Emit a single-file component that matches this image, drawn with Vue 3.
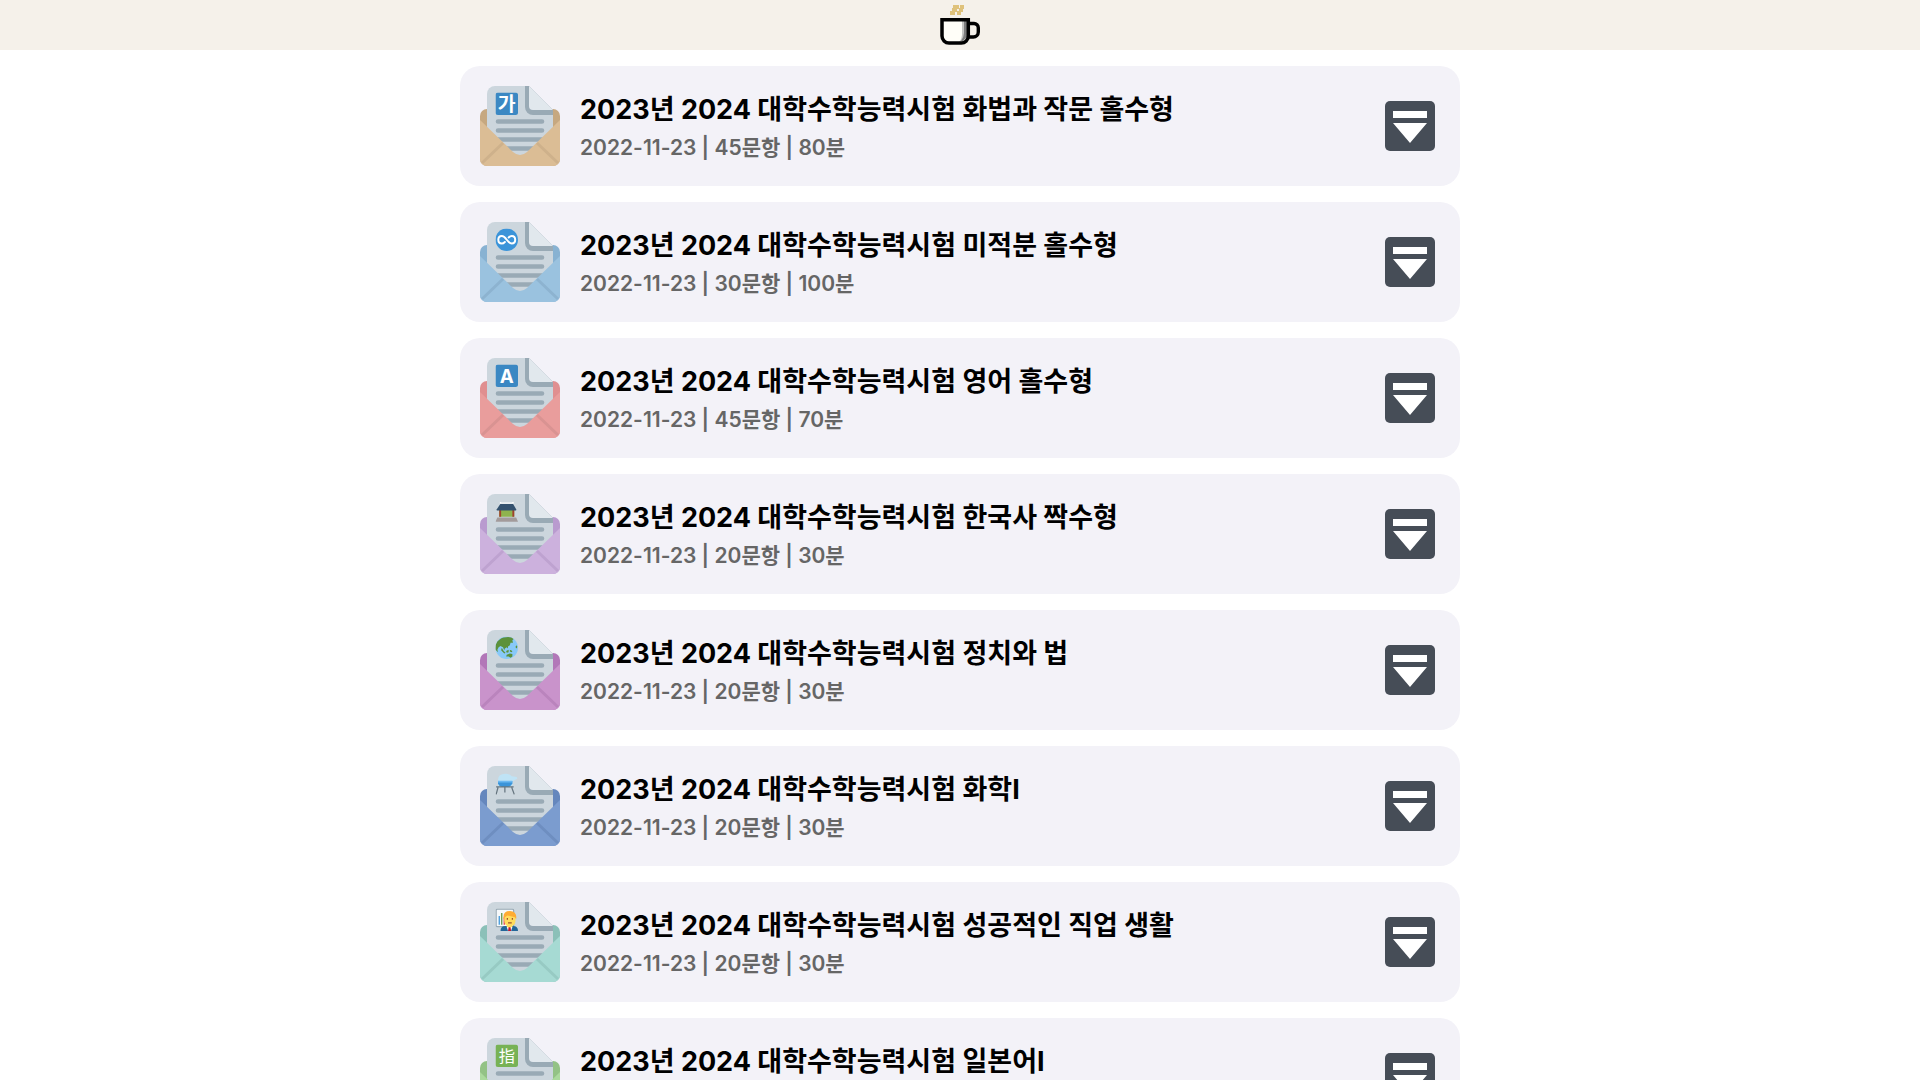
<template>
  <div class="page">
    <header class="header">
      <a class="header__logo" href="#" aria-label="Home">
        <svg viewBox="0 0 40 42">
          <path d="M10 12V8h2V5h1V2h6v4h-2v3h-2v3zM17 12V8h2V5h1V2h4v4h-1v3h-2v3z" fill="#dfc27b" />
          <path d="M2 17H28V33a7 7 0 0 1-7 7H9a7 7 0 0 1-7-7z" fill="#fffef8" />
          <path d="M22 18h3v17l-3 4h-3q3-3 3-7z" fill="#c4c4c2" />
          <path d="M24 18h4v15l-5 5h-2q3-4 3-8z" fill="#7d7d7d" />
          <path
            d="M2 16.700H28.300V33a7 7 0 0 1-7 7H9a7 7 0 0 1-7-7z"
            fill="none"
            stroke="#000"
            stroke-width="3.500"
          />
          <path
            d="M29 20.500h5a4.300 4.300 0 0 1 4.300 4.300v4.200a5 5 0 0 1-5 5H29"
            fill="none"
            stroke="#000"
            stroke-width="3.400"
          />
        </svg>
      </a>
    </header>

    <main class="exams">
      <article v-for="exam in exams" :key="exam.id" class="exam" :class="`exam--${exam.theme}`">
        <svg class="exam__icon" viewBox="0 0 80 80" aria-hidden="true">
          <rect class="envelope-back" y="23" width="80" height="57" rx="7" />
          <path d="M15 0H47L73 26V70H7V8a8 8 0 0 1 8-8z" fill="#ccd6dd" />
          <path d="M45 0h4L73 24v5H53a8 8 0 0 1-8-8z" fill="#99aab5" />
          <path d="M49 0 73 24H53a4 4 0 0 1-4-4z" fill="#e1e8ed" />
          <path
            d="M18 35.500H62M18 44.500H62M18 53.500H62M18 62.500H62"
            stroke="#99aab5"
            stroke-width="4.600"
            stroke-linecap="round"
          />

          <svg x="15.500" y="6.500" width="22.500" height="22.500" viewBox="0 0 36 36">
            <g v-if="exam.badge === 'ga'">
              <rect width="36" height="36" rx="4" fill="#3b88c3" />
              <text class="badge-text" x="18" y="29" font-size="31">가</text>
            </g>
            <g v-else-if="exam.badge === 'infinity'">
              <circle cx="18" cy="18" r="18" fill="#3b94d9" />
              <path
                d="M15 21.500C13 23.500 11.500 24 10 24c-3.500 0-5.500-2.500-5.500-6s2-6 5.500-6c7 0 9 12 16 12 3.500 0 5.500-2.500 5.500-6s-2-6-5.500-6c-2 0-3.500.8-5 2.500"
                fill="none"
                stroke="#fff"
                stroke-width="3.200"
                stroke-linecap="round"
              />
            </g>
            <g v-else-if="exam.badge === 'letter'">
              <rect width="36" height="36" rx="4" fill="#3b88c3" />
              <text class="badge-text" x="18" y="29" font-size="30">A</text>
            </g>
            <g v-else-if="exam.badge === 'palace'">
              <path d="M3 27H33L36 34H0z" fill="#a39b9b" />
              <path d="M6 15H30V26H6z" fill="#8fb34e" />
              <path d="M6 15h3v11H6zM27 15h3v11h-3z" fill="#a0412d" />
              <path d="M8 5H28L33 14V16H2V14z" fill="#34526f" />
              <path d="M7 2 10 3H26L29 2V5H7z" fill="#fff" />
            </g>
            <g v-else-if="exam.badge === 'globe'">
              <circle cx="18" cy="18" r="18" fill="#88c9f9" />
              <path
                d="M3 8Q9 1 17 1q8-1 12 3l-2 2 1 4-4 0-1 4-3 2 0 3-2-2-3 2-1 3-2-5-4-2-3 2-2 4 1 4-4-4Q-1 14 3 8z"
                fill="#5c913b"
              />
              <path
                d="m10 18 3 5 3 3-2 1-5-5zM17 23l4-2 0 4-3 1zM23 21l4 2-1 2-3-1zM18 29l5-2 4 1 0 4-3 2-3-2-4 0zM33 14l2 2-1 3-2-2z"
                fill="#5c913b"
              />
            </g>
            <g v-else-if="exam.badge === 'chemistry'">
              <path d="M4 12Q4 2 16 2q6 0 10 4l8 1 1 3-8 4v7H4z" fill="#bfe3f5" />
              <path d="M4 14H27v3q-3 6-7 6h-9q-5 0-7-6z" fill="#3b94d9" />
              <path d="M4 13H27v3H4z" fill="#6bb8f2" />
              <path
                d="M1 23H29M4 24 1 35M26 24l4 11M15 24v8"
                fill="none"
                stroke="#66757f"
                stroke-width="2"
              />
            </g>
            <g v-else-if="exam.badge === 'office'">
              <rect x="1" y="1" width="28" height="28" rx="2" fill="#f5f8fa" stroke="#99aab5" stroke-width="2" />
              <path d="M5 12h2v14H5z" fill="#3b94d9" />
              <path d="M9 7h2v19H9z" fill="#5c913b" />
              <path d="M13 14h2v12h-2z" fill="#dd2e44" />
              <path d="M8 36q0-8 8-8h12q8 0 8 8z" fill="#226699" />
              <path d="M18 25h9v5l-4 3-5-3z" fill="#ffdc5d" />
              <path d="m18 29 4 2 5-2-2 7h-5z" fill="#fff" />
              <path d="M21 30h3l1 6h-5z" fill="#be1931" />
              <path d="M14 14q0-7 9-7t9 7v5q0 9-9 9t-9-9z" fill="#ffdc5d" />
              <path d="M13 17Q11 4 23 4q12 1 10 13l-2-3-12-3-4 3z" fill="#ffac33" />
              <path d="M19 15v3M27 15v3M20 23h6" stroke="#a0522d" stroke-width="2" />
            </g>
            <g v-else>
              <rect width="36" height="36" rx="4" fill="#77b255" />
              <text class="badge-text badge-text--thin" x="18" y="28" font-size="26">指</text>
            </g>
          </svg>

          <path
            class="envelope-front"
            d="M0 34 33 66Q40 72 47 66L80 34V73a7 7 0 0 1-7 7H7a7 7 0 0 1-7-7z"
          />
          <path class="envelope-line" d="M2 77 23 57M78 77 57 57" />
        </svg>

        <div class="exam__text">
          <h2 class="exam__title">{{ exam.title }}</h2>
          <p class="exam__meta">{{ exam.date }} | {{ exam.questions }}문항 | {{ exam.minutes }}분</p>
        </div>

        <button class="exam__toggle" type="button" :aria-label="exam.title">
          <svg viewBox="0 0 50 50">
            <rect width="50" height="50" rx="5" fill="#464d57" />
            <path d="M8 10H42V17H8zM8 22H42L25 42z" fill="#fff" />
          </svg>
        </button>
      </article>
    </main>
  </div>
</template>

<script setup>
import { ref } from 'vue'

const exams = ref([
  {
    id: 1,
    title: '2023년 2024 대학수학능력시험 화법과 작문 홀수형',
    date: '2022-11-23',
    questions: 45,
    minutes: 80,
    theme: 'korean',
    badge: 'ga',
  },
  {
    id: 2,
    title: '2023년 2024 대학수학능력시험 미적분 홀수형',
    date: '2022-11-23',
    questions: 30,
    minutes: 100,
    theme: 'math',
    badge: 'infinity',
  },
  {
    id: 3,
    title: '2023년 2024 대학수학능력시험 영어 홀수형',
    date: '2022-11-23',
    questions: 45,
    minutes: 70,
    theme: 'english',
    badge: 'letter',
  },
  {
    id: 4,
    title: '2023년 2024 대학수학능력시험 한국사 짝수형',
    date: '2022-11-23',
    questions: 20,
    minutes: 30,
    theme: 'history',
    badge: 'palace',
  },
  {
    id: 5,
    title: '2023년 2024 대학수학능력시험 정치와 법',
    date: '2022-11-23',
    questions: 20,
    minutes: 30,
    theme: 'social',
    badge: 'globe',
  },
  {
    id: 6,
    title: '2023년 2024 대학수학능력시험 화학Ⅰ',
    date: '2022-11-23',
    questions: 20,
    minutes: 30,
    theme: 'science',
    badge: 'chemistry',
  },
  {
    id: 7,
    title: '2023년 2024 대학수학능력시험 성공적인 직업 생활',
    date: '2022-11-23',
    questions: 20,
    minutes: 30,
    theme: 'career',
    badge: 'office',
  },
  {
    id: 8,
    title: '2023년 2024 대학수학능력시험 일본어Ⅰ',
    date: '2022-11-23',
    questions: 30,
    minutes: 40,
    theme: 'language',
    badge: 'kanji',
  },
])
</script>

<style>
body {
  margin: 0;
  background-color: #fff;
}
</style>

<style scoped>
.page {
  height: 100vh;
  overflow-y: auto;
  scrollbar-width: none;
  font-family: Inter, 'Noto Sans CJK KR', sans-serif;
}

.header {
  display: flex;
  justify-content: center;
  box-sizing: border-box;
  height: 50px;
  padding-top: 3px;
  background-color: #f5f1ea;
}

.header__logo svg {
  display: block;
  width: 40px;
  height: 42px;
}

.exams {
  display: flex;
  flex-direction: column;
  gap: 16px;
  max-width: 1000px;
  margin: 0 auto;
  padding: 16px 0;
}

.exam {
  display: flex;
  align-items: center;
  gap: 20px;
  padding: 20px 25px 20px 20px;
  border-radius: 20px;
  background-color: #f3f2f8;
}

.exam__icon {
  flex: none;
  width: 80px;
  height: 80px;
}

.exam__text {
  flex: 1;
  min-width: 0;
  padding-top: 4px;
}

.exam__title {
  margin: 0;
  font-size: 27px;
  line-height: 40px;
  font-weight: 700;
  color: #000;
}

.exam__meta {
  margin: 0;
  font-size: 21px;
  line-height: 36px;
  font-weight: 600;
  color: #666;
}

.exam__toggle {
  flex: none;
  width: 50px;
  height: 50px;
  padding: 0;
  border: none;
  background: none;
  cursor: pointer;
}

.exam__toggle svg {
  display: block;
}

.badge-text {
  fill: #fff;
  font-weight: 700;
  text-anchor: middle;
}

.badge-text--thin {
  font-family: 'Noto Sans CJK JP', sans-serif;
  font-weight: 400;
}

.envelope-back {
  fill: var(--back);
}

.envelope-front {
  fill: var(--front);
}

.envelope-line {
  fill: none;
  stroke: var(--line);
  stroke-width: 3;
}

.exam--korean {
  --back: #c6a880;
  --front: #dbbd95;
  --line: #ceb18b;
}

.exam--math {
  --back: #88b2d2;
  --front: #9ac2df;
  --line: #8db3d0;
}

.exam--english {
  --back: #e08f90;
  --front: #e99d9c;
  --line: #d99392;
}

.exam--history {
  --back: #b99bcf;
  --front: #ccb1dd;
  --line: #bea2d0;
}

.exam--social {
  --back: #b277b8;
  --front: #c993cb;
  --line: #ba84bd;
}

.exam--science {
  --back: #6587bd;
  --front: #7b9ccf;
  --line: #6e8ec0;
}

.exam--career {
  --back: #8bc0b8;
  --front: #a6dad3;
  --line: #97cac3;
}

.exam--language {
  --back: #93c285;
  --front: #abd99d;
  --line: #9bc98d;
}
</style>
